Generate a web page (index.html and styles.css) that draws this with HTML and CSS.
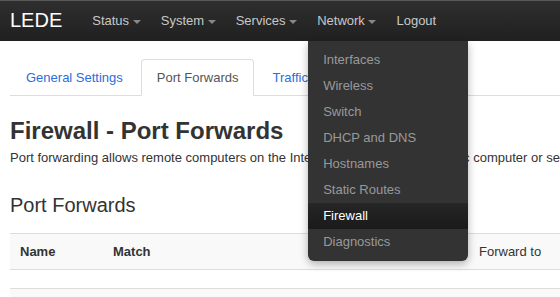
FILE: index.html
```html
<!DOCTYPE html>
<html lang="en">
<head>
      <meta charset="UTF-8">
      <meta name="viewport" content="width=device-width, initial-scale=1.0">
      <title>Firewall - Port Forwards - LuCI</title>
      <link rel="stylesheet" href="styles.css">
</head>
<body>
      <header class="navbar">
            <a class="brand" href="#">LEDE</a>
            <ul class="nav">
                  <li><a href="#">Status <span class="caret"></span></a></li>
                  <li><a href="#">System <span class="caret"></span></a></li>
                  <li><a href="#">Services <span class="caret"></span></a></li>
                  <li class="open">
                        <a href="#">Network <span class="caret"></span></a>
                        <ul class="dropdown">
                              <li><a href="#">Interfaces</a></li>
                              <li><a href="#">Wireless</a></li>
                              <li><a href="#">Switch</a></li>
                              <li><a href="#">DHCP and DNS</a></li>
                              <li><a href="#">Hostnames</a></li>
                              <li><a href="#">Static Routes</a></li>
                              <li class="active"><a href="#">Firewall</a></li>
                              <li><a href="#">Diagnostics</a></li>
                        </ul>
                  </li>
                  <li><a href="#">Logout</a></li>
            </ul>
      </header>

      <div class="container">
            <ul class="tabs">
                  <li><a href="#">General Settings</a></li>
                  <li class="active"><a href="#">Port Forwards</a></li>
                  <li><a href="#">Traffic Rules</a></li>
                  <li><a href="#">Custom Rules</a></li>
            </ul>

            <h2>Firewall - Port Forwards</h2>
            <p class="desc">Port forwarding allows remote computers on the Internet to connect to a specific computer or service within the private LAN.</p>

            <h3>Port Forwards</h3>
            <table class="rules">
                  <tr class="head">
                        <th class="col-name">Name</th>
                        <th class="col-match">Match</th>
                        <th class="col-fwd">Forward to</th>
                        <th>Enable</th>
                  </tr>
                  <tr class="empty"><td colspan="4"></td></tr>
                  <tr class="stripe"><td colspan="4"></td></tr>
            </table>
      </div>
</body>
</html>
```

FILE: styles.css
```css
*{
      box-sizing: border-box;
}

body{
      margin: 0;
      overflow: hidden;
      font-family: "Liberation Sans", Arial, sans-serif;
      font-size: 13px;
      color: #333;
      background-color: #fff;
}

a{
      text-decoration: none;
}

/* top bar */
.navbar{
      height: 41px;
      display: flex;
      align-items: center;
      padding-left: 10px;
      background: linear-gradient(#2f2f2f, #202020);
      box-shadow: inset 0 1px 0 #5a5a5a;
}

.brand{
      font-size: 20px;
      color: #fff;
      margin-right: 20px;
}

.nav{
      list-style: none;
      margin: 0;
      padding: 0;
      display: flex;
}

.nav > li{
      position: relative;
}

.nav > li > a{
      display: block;
      padding: 0 10px;
      line-height: 41px;
      color: #c8c8c8;
}

.caret{
      display: inline-block;
      vertical-align: middle;
      border-top: 4px solid #888;
      border-left: 4px solid transparent;
      border-right: 4px solid transparent;
}

.dropdown{
      position: absolute;
      top: 41px;
      left: 1px;
      width: 160px;
      list-style: none;
      margin: 0;
      padding: 6px 0;
      background-color: #333;
      border-radius: 0 0 6px 6px;
      box-shadow: 0 3px 8px rgba(0, 0, 0, 0.3);
      z-index: 10;
}

.dropdown a{
      display: block;
      padding: 0 15px;
      line-height: 26px;
      color: #999;
}

.dropdown .active a{
      color: #fff;
      background: linear-gradient(#262626, #1a1a1a);
}

/* page */
.container{
      width: 900px;
      padding: 18px 10px 0;
}

.tabs{
      list-style: none;
      margin: 0;
      padding: 0;
      display: flex;
      border-bottom: 1px solid #ddd;
}

.tabs li{
      margin-right: 2px;
      margin-bottom: -1px;
}

.tabs a{
      display: block;
      padding: 0 15px;
      line-height: 35px;
      border: 1px solid transparent;
      border-radius: 4px 4px 0 0;
      color: #2a6edd;
}

.tabs .active a{
      color: #555;
      background-color: #fff;
      border-color: #ddd #ddd transparent;
}

h2{
      margin: 22px 0 0;
      font-size: 24px;
      line-height: 26px;
      font-weight: bold;
}

.desc{
      margin: 5px 0 0;
      line-height: 18px;
      white-space: nowrap;
}

h3{
      margin: 27px 0 0;
      font-size: 20px;
      line-height: 22px;
      font-weight: normal;
}

.rules{
      margin-top: 17px;
      width: 880px;
      border-collapse: collapse;
}

.rules tr{
      border-top: 1px solid #ddd;
}

.rules th{
      text-align: left;
      padding: 0 10px;
      height: 36px;
}

.head{
      background-color: #f9f9f9;
}

.col-name{
      width: 93px;
}

.col-match{
      width: 366px;
}

.col-fwd{
      font-weight: normal;
      width: 200px;
}

.empty td{
      height: 19px;
}

.stripe{
      background-color: #f9f9f9;
}

.stripe td{
      height: 30px;
}
```
